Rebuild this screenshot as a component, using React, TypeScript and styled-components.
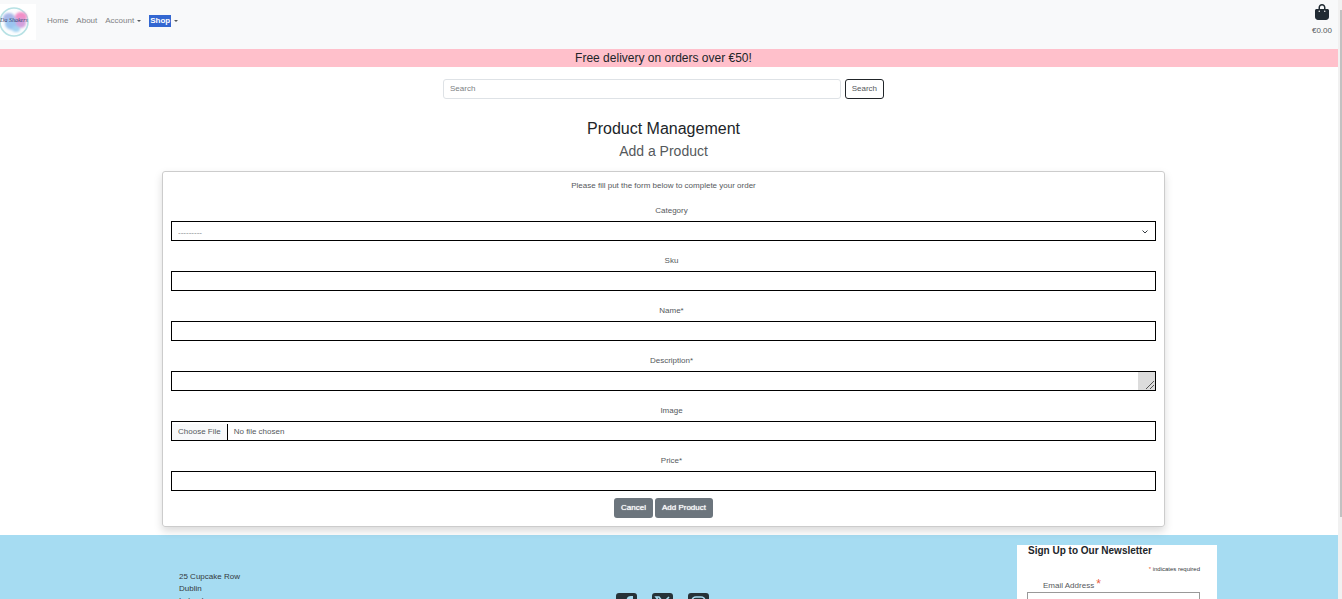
import React from 'react';
import styled, { createGlobalStyle } from 'styled-components';

const GlobalStyle = createGlobalStyle`
  *, *::before, *::after { box-sizing: border-box; }
  body {
    margin: 0;
    background: #fff;
    color: #55595c;
    font-family: "Liberation Sans", Arial, sans-serif;
    font-size: 8px;
    line-height: 12px;
  }
  h1, h2, h3, p { margin: 0; font-weight: 400; }
  button, input, select, textarea { font: inherit; color: inherit; margin: 0; }
  a { color: inherit; text-decoration: none; }
`;

const Shell = styled.div`
  display: flex;
  height: 100vh;
  overflow: hidden;
`;

const Page = styled.div`
  flex: 1;
  min-width: 0;
  overflow: hidden;
`;

const ScrollTrack = styled.div`
  width: 4px;
  padding: 10px 0 0 2px;
  background: #f1f1f1;
`;

const ScrollThumb = styled.div`
  height: 86%;
  background: #c1c1c1;
`;

const Navbar = styled.header`
  display: flex;
  justify-content: space-between;
  height: 49px;
  padding-right: 6px;
  background: #f8f9fa;
`;

const NavStart = styled.div`
  display: flex;
  gap: 11px;
  padding-top: 4px;
`;

const Brand = styled.a`
  display: block;
  width: 36px;
  height: 36px;
`;

const Nav = styled.nav`
  display: flex;
  align-items: center;
  gap: 8px;
  height: 34px;
`;

const NavLink = styled.a<{ $caret?: boolean }>`
  display: flex;
  align-items: center;
  gap: 3px;
  color: #7f8183;
  &::after {
    content: "";
    display: ${p => (p.$caret ? 'block' : 'none')};
    border: 2px solid transparent;
    border-top-color: #55595c;
    border-bottom: 0;
  }
`;

const Highlight = styled.span`
  padding: 0 1px;
  background: #3367d1;
  color: #fff;
  font-weight: 700;
`;

const Cart = styled.a`
  display: flex;
  flex-direction: column;
  align-items: center;
  gap: 5px;
  padding-top: 4px;
`;

const Banner = styled.p`
  padding-right: 11px;
  background: #ffc0cb;
  color: #212529;
  font-size: 12px;
  line-height: 18px;
  text-align: center;
`;

const Main = styled.main`
  display: flex;
  flex-direction: column;
  align-items: center;
  padding: 12px 11px 8px 0;
`;

const SearchForm = styled.form`
  display: flex;
  gap: 4px;
  width: 100%;
  max-width: 441px;
`;

const SearchInput = styled.input`
  flex: 1;
  min-width: 0;
  height: 20px;
  padding: 0 6px 2px;
  border: 1px solid #dee2e6;
  border-radius: 3px;
  &::placeholder { color: #7c8084; opacity: 1; }
`;

const SearchButton = styled.button`
  height: 20px;
  padding: 0 6px;
  border: 1px solid #212529;
  border-radius: 3px;
  background: #fff;
`;

const Title = styled.h1`
  margin-top: 20px;
  color: #212529;
  font-size: 16px;
  line-height: 20px;
`;

const Subtitle = styled.h2`
  margin: 3px 0 11px;
  font-size: 14px;
  line-height: 18px;
`;

const Card = styled.form`
  display: flex;
  flex-direction: column;
  width: 100%;
  max-width: 1003px;
  padding: 8px;
  border: 1px solid #ccc;
  border-radius: 3px;
  box-shadow: 0 4px 8px rgba(0, 0, 0, 0.15);
  text-align: center;
`;

const Fields = styled.div`
  display: flex;
  flex-direction: column;
  gap: 14px;
  margin: 13px 0 7px;
`;

const FieldGroup = styled.div`
  display: flex;
  flex-direction: column;
  gap: 4px;
`;

const Label = styled.label`
  padding-left: 16px;
`;

const ControlWrap = styled.div`
  position: relative;
  display: flex;
`;

const controlStyle = `
  display: block;
  width: 100%;
  height: 20px;
  border: 1px solid #000;
  border-radius: 0;
  background: #fff;
`;

const TextInput = styled.input`
  ${controlStyle}
  padding: 0 6px;
`;

const TextArea = styled.textarea`
  ${controlStyle}
  padding: 3px 6px;
  resize: none;
  overflow: hidden;
`;

const Select = styled.select`
  ${controlStyle}
  padding: 3px 6px 0;
  appearance: none;
  color: #85898c;
`;

const FileInput = styled.input`
  ${controlStyle}
  padding: 2px 0 0;
  line-height: 16px;
  &::file-selector-button {
    height: 16px;
    margin: 0 6px 0 0;
    padding: 0 6px;
    border: 0;
    border-right: 1px solid #000;
    background: #f8f9fa;
    color: inherit;
    font: inherit;
  }
`;

const Chevron = styled.svg`
  position: absolute;
  top: 8px;
  right: 8px;
  pointer-events: none;
`;

const Grip = styled.svg`
  position: absolute;
  top: 1px;
  right: 1px;
  background: #dcdcdc;
`;

const Actions = styled.div`
  display: flex;
  justify-content: center;
  gap: 2px;
`;

const ActionButton = styled.button`
  height: 20px;
  padding: 0 7px;
  border: 0;
  border-radius: 3px;
  background: #6c757d;
  color: #fff;
  text-shadow: 0 0 1px #fff;
`;

const Footer = styled.footer`
  display: grid;
  grid-template-columns: 1fr 1fr 1fr;
  height: 260px;
  padding: 10px 11px 0 0;
  background: #a6dcf2;
  color: #343a40;
`;

const Address = styled.address`
  padding: 26px 0 0 179px;
  font-style: normal;
`;

const Social = styled.div`
  display: flex;
  justify-content: center;
  gap: 12px;
  padding-top: 46px;
`;

const Newsletter = styled.form`
  justify-self: end;
  width: 200px;
  height: 200px;
  margin-right: 110px;
  padding: 0 17px 0 10px;
  background: #fff;
`;

const NewsTitle = styled.h3`
  padding-left: 1px;
  color: #212529;
  font-size: 10px;
  font-weight: 700;
`;

const Required = styled.p`
  margin-top: 6px;
  font-size: 6px;
  text-align: right;
`;

const Star = styled.span<{ $large?: boolean }>`
  color: #e85c41;
  font-size: ${p => (p.$large ? '12px' : 'inherit')};
  line-height: 8px;
`;

const EmailLabel = styled.label`
  display: block;
  margin-top: 5px;
  padding-left: 16px;
  color: #55595c;
`;

const EmailInput = styled.input`
  display: block;
  width: 100%;
  height: 20px;
  border: 1px solid #999;
`;

function Logo() {
  return (
    <svg width="36" height="36" viewBox="0 0 36 36" role="img" aria-label="Home">
      <defs>
        <filter id="wash" x="-30%" y="-30%" width="160%" height="160%">
          <feGaussianBlur stdDeviation="1.3" />
        </filter>
      </defs>
      <rect width="36" height="36" fill="#fff" />
      <circle cx="14" cy="18" r="14" fill="#fbfdfe" stroke="#b7e1e4" strokeWidth="1.6" />
      <g filter="url(#wash)">
        <ellipse cx="9" cy="14" rx="6" ry="5" fill="#a9b8e8" />
        <ellipse cx="21" cy="13" rx="6" ry="5" fill="#f28fc8" />
        <ellipse cx="13" cy="20" rx="8" ry="6" fill="#9bc4f0" />
        <ellipse cx="21" cy="19" rx="5" ry="5" fill="#d3a0dd" />
        <ellipse cx="16" cy="25" rx="4" ry="3" fill="#a6d4f2" />
      </g>
      <text x="14" y="18" textAnchor="middle" fontFamily="Liberation Serif, serif" fontStyle="italic" fontSize="6" fill="#39406b">Da Shakers</text>
    </svg>
  );
}

function BagIcon() {
  return (
    <svg width="14" height="16" viewBox="0 0 448 512" fill="#212b33" aria-hidden="true">
      <path d="M160 112c0-35 29-64 64-64s64 29 64 64v48H160V112zm-48 48H48c-26 0-48 22-48 48V416c0 53 43 96 96 96H352c53 0 96-43 96-96V208c0-26-22-48-48-48H336V112C336 50 286 0 224 0S112 50 112 112v48zm24 48a24 24 0 1 1 0 48 24 24 0 1 1 0-48zm152 24a24 24 0 1 1 48 0 24 24 0 1 1-48 0z" />
    </svg>
  );
}

function SocialIcon({ kind }: { kind: 'facebook' | 'x' | 'instagram' }) {
  return (
    <svg width="24" height="24" viewBox="0 0 24 24" aria-hidden="true">
      <rect x="1" y="2" width="21" height="21" rx="3" fill="#263238" />
      {kind === 'facebook' && <path d="M18 6.5h-2c-2 0-3 1-3 3V23M9 13h8" fill="none" stroke="#a6dcf2" strokeWidth="3" />}
      {kind === 'x' && <path d="M5 6h3l10 13h-3zM18 6 5 19" fill="none" stroke="#a6dcf2" strokeWidth="1.6" />}
      {kind === 'instagram' && (
        <g fill="none" stroke="#a6dcf2" strokeWidth="1.6">
          <rect x="5" y="6" width="13" height="13" rx="4" />
          <circle cx="11.5" cy="12.5" r="3" />
        </g>
      )}
    </svg>
  );
}

function Field({ id, label, children }: { id: string; label: string; children: React.ReactNode }) {
  return (
    <FieldGroup>
      <Label htmlFor={id}>{label}</Label>
      <ControlWrap>{children}</ControlWrap>
    </FieldGroup>
  );
}

export default function App() {
  return (
    <>
      <GlobalStyle />
      <Shell>
        <Page>
          <Navbar>
            <NavStart>
              <Brand href="#"><Logo /></Brand>
              <Nav>
                <NavLink href="#">Home</NavLink>
                <NavLink href="#">About</NavLink>
                <NavLink href="#" $caret>Account</NavLink>
                <NavLink href="#" $caret><Highlight>Shop</Highlight></NavLink>
              </Nav>
            </NavStart>
            <Cart href="#">
              <BagIcon />
              <span>€0.00</span>
            </Cart>
          </Navbar>
          <Banner>Free delivery on orders over €50!</Banner>
          <Main>
            <SearchForm role="search">
              <SearchInput type="search" placeholder="Search" aria-label="Search" />
              <SearchButton type="button">Search</SearchButton>
            </SearchForm>
            <Title>Product Management</Title>
            <Subtitle>Add a Product</Subtitle>
            <Card>
              <p>Please fill put the form below to complete your order</p>
              <Fields>
                <Field id="category" label="Category">
                  <Select id="category">
                    <option>---------</option>
                  </Select>
                  <Chevron width="6" height="6" viewBox="0 0 6 6" aria-hidden="true">
                    <path d="M.5 1.5 3 4l2.500-2.500" fill="none" stroke="#343a40" />
                  </Chevron>
                </Field>
                <Field id="sku" label="Sku"><TextInput id="sku" type="text" /></Field>
                <Field id="name" label="Name*"><TextInput id="name" type="text" /></Field>
                <Field id="description" label="Description*">
                  <TextArea id="description" rows={1} />
                  <Grip width="17" height="18" viewBox="0 0 17 18" aria-hidden="true">
                    <path d="M8 17l8-8M12 17l4-4" stroke="#555" fill="none" />
                  </Grip>
                </Field>
                <Field id="image" label="Image"><FileInput id="image" type="file" /></Field>
                <Field id="price" label="Price*"><TextInput id="price" type="text" /></Field>
              </Fields>
              <Actions>
                <ActionButton type="button">Cancel</ActionButton>
                <ActionButton type="button">Add Product</ActionButton>
              </Actions>
            </Card>
          </Main>
          <Footer>
            <Address>25 Cupcake Row<br />Dublin<br />Ireland</Address>
            <Social>
              <a href="#" aria-label="Facebook"><SocialIcon kind="facebook" /></a>
              <a href="#" aria-label="X"><SocialIcon kind="x" /></a>
              <a href="#" aria-label="Instagram"><SocialIcon kind="instagram" /></a>
            </Social>
            <Newsletter>
              <NewsTitle>Sign Up to Our Newsletter</NewsTitle>
              <Required><Star>*</Star> indicates required</Required>
              <EmailLabel htmlFor="email">Email Address <Star $large>*</Star></EmailLabel>
              <EmailInput id="email" type="email" />
            </Newsletter>
          </Footer>
        </Page>
        <ScrollTrack><ScrollThumb /></ScrollTrack>
      </Shell>
    </>
  );
}
